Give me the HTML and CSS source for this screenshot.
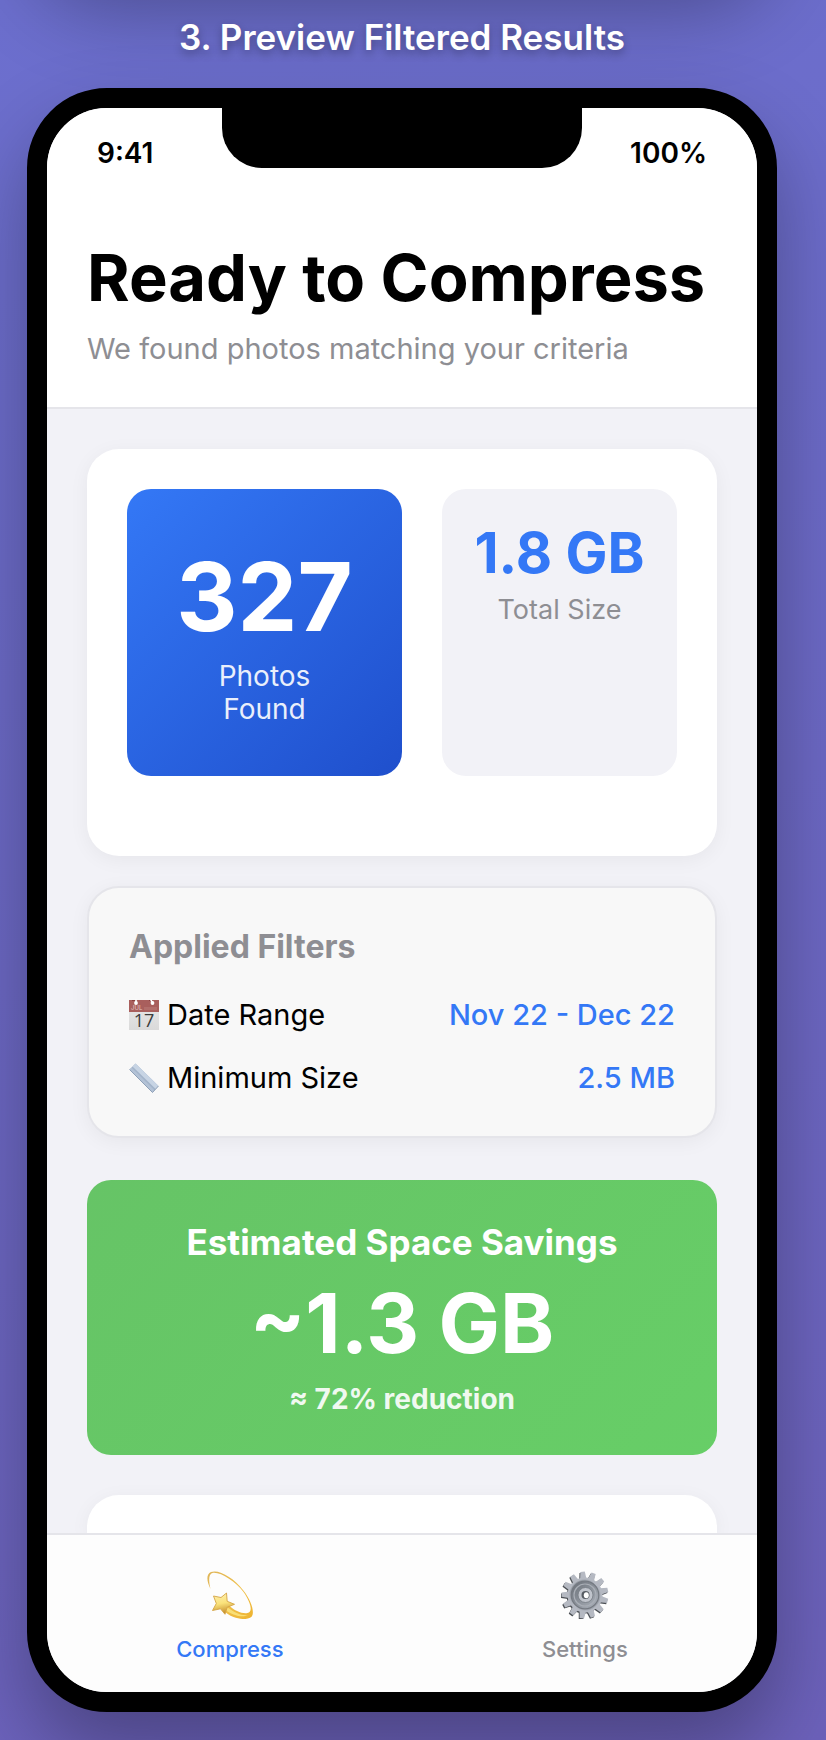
FILE: index.html
```html
<!DOCTYPE html>
<html lang="en">
<head>
<meta charset="utf-8">
<meta name="viewport" content="width=device-width, initial-scale=1">
<title>Preview Filtered Results</title>
<link rel="stylesheet" href="styles.css">
</head>
<body>
<main class="page">
  <h2 class="step-title">3. Preview Filtered Results</h2>
  <section class="device">
    <div class="notch"></div>
    <header class="header">
      <div class="status"><span>9:41</span><span>100%</span></div>
      <h1 class="title">Ready to Compress</h1>
      <p class="subtitle">We found photos matching your criteria</p>
    </header>
    <div class="content">
      <section class="card stats">
        <div class="tile tile-primary">
          <div class="count">327</div>
          <div class="count-label">Photos Found</div>
        </div>
        <div class="tile tile-plain">
          <div class="size">1.8 GB</div>
          <div class="size-label">Total Size</div>
        </div>
      </section>
      <section class="card filters">
        <h3 class="filters-title">Applied Filters</h3>
        <dl class="filter-list">
          <div class="filter">
            <dt>
              <svg class="filter-icon" viewBox="0 0 30 30" aria-hidden="true">
                <defs><linearGradient id="paper" x2="0" y2="1"><stop stop-color="#e9e9e9"/><stop offset="1" stop-color="#dadada"/></linearGradient></defs>
                <path fill="url(#paper)" d="M0 0h30v30H0z"/>
                <path fill="#a95f5d" d="M0 0h30v12H0z"/>
                <path fill="#bb7d7a" d="M15 7h13v3H15z" opacity=".5"/>
                <path stroke="#873f3d" stroke-width="1" d="M3 .5h4M20 .5h4"/>
                <path stroke="#fff" stroke-width="1.600" stroke-linecap="round" d="M7 0v2.500M22 0l1.500 2.500"/>
                <circle cx="7" cy="3" r="1.900" fill="#fff"/><circle cx="23.500" cy="3" r="1.900" fill="#fff"/>
                <text class="cal-month" x="2" y="10">JUL</text>
                <text class="cal-day" x="15" y="27" text-anchor="middle">17</text>
              </svg>
              Date Range
            </dt>
            <dd>Nov 22 - Dec 22</dd>
          </div>
          <div class="filter">
            <dt>
              <svg class="filter-icon" viewBox="0 0 30 30" aria-hidden="true">
                <path fill="#a3b4ca" d="M.5 6.500 6.500.5 29.500 23 23.500 29.500z"/>
                <path fill="#c7d4e4" d="M3.500 3.500 6.500.5 29.500 23 26.700 26z"/>
                <path fill="#b3c2d6" d="M.5 6.500 2.500 4.500 25.500 27.300 23.500 29.500z"/>
                <path stroke="#8395ae" stroke-width=".8" d="M.5 6.500 23.500 29.500 29.500 23" fill="none"/>
              </svg>
              Minimum Size
            </dt>
            <dd>2.5 MB</dd>
          </div>
        </dl>
      </section>
      <section class="savings">
        <h3 class="savings-title">Estimated Space Savings</h3>
        <div class="savings-value">~1.3 GB</div>
        <div class="savings-note">≈ 72% reduction</div>
      </section>
      <div class="card next-card"></div>
    </div>
    <nav class="tabs">
      <button class="tab tab-active" type="button">
        <svg class="tab-icon" viewBox="0 0 48 48" aria-hidden="true">
          <defs>
            <linearGradient id="trail" x1="0" y1="0" x2="1" y2="1"><stop stop-color="#dfb559"/><stop offset=".55" stop-color="#f0c14c"/><stop offset="1" stop-color="#eeb32f"/></linearGradient>
            <linearGradient id="star" x1="0" y1="0" x2=".2" y2="1"><stop stop-color="#fff1b5"/><stop offset=".55" stop-color="#fae27a"/><stop offset="1" stop-color="#c8912e"/></linearGradient>
          </defs>
          <path fill="url(#trail)" d="M4.500 18C.5 10 0 3 5 1c8-3 23 6 32 18 8 10 11 20 9.500 25-1.500 5-11 5-19 2-4-1.500-8-4-10-7l5-5c6 6 14 9 19 8 6-1 3-11-4-21C29.500 10.500 14 .5 6.500 2 2.500 3 2.500 9.500 4.500 18z"/>
          <path fill="#f9df76" d="M21 36c8 6 15 9 21 8-5 3-15 1-24-6z"/>
          <path fill="url(#star)" stroke="#d4a445" stroke-width=".9" stroke-linejoin="round" d="m20.500 22 .7 8.300 7.300 3-7.300 3-2.200 7-4.500-5.500-8 1.700 3.800-7-2.800-7.500 7.500 1.500z"/>
        </svg>
        <span>Compress</span>
      </button>
      <button class="tab" type="button">
        <svg class="tab-icon" viewBox="0 0 48 48" aria-hidden="true">
          <defs>
            <linearGradient id="gear" x1="0" y1="0" x2="1" y2="1"><stop stop-color="#8b9299"/><stop offset=".5" stop-color="#b6bac4"/><stop offset="1" stop-color="#9298a1"/></linearGradient>
            <linearGradient id="dish" x1="0" y1="0" x2="1" y2="1"><stop stop-color="#686e76"/><stop offset="1" stop-color="#aeb4bd"/></linearGradient>
            <g id="teeth">
              <path id="tooth" d="m20.800 8 1-7.400h4.400l1 7.400z"/>
              <use href="#tooth" transform="rotate(27.700 24 24)"/><use href="#tooth" transform="rotate(55.400 24 24)"/>
              <use href="#tooth" transform="rotate(83.100 24 24)"/><use href="#tooth" transform="rotate(110.800 24 24)"/>
              <use href="#tooth" transform="rotate(138.500 24 24)"/><use href="#tooth" transform="rotate(166.200 24 24)"/>
              <use href="#tooth" transform="rotate(193.800 24 24)"/><use href="#tooth" transform="rotate(221.500 24 24)"/>
              <use href="#tooth" transform="rotate(249.200 24 24)"/><use href="#tooth" transform="rotate(276.900 24 24)"/>
              <use href="#tooth" transform="rotate(304.600 24 24)"/><use href="#tooth" transform="rotate(332.300 24 24)"/>
              <circle cx="24" cy="24" r="17.500"/>
            </g>
          </defs>
          <g transform="rotate(-6 24 24)"><use href="#teeth" x="-1" y="1" fill="#4c5055"/><use href="#teeth" fill="#b5b9c2"/></g>
          <circle cx="24" cy="24" r="15.500" fill="url(#gear)"/>
          <circle cx="24" cy="24" r="13.800" fill="url(#dish)" stroke="#757a82" stroke-width="1.200"/>
          <circle cx="24" cy="24" r="11" fill="none" stroke="#a9aeb6" stroke-width="1.200"/>
          <circle cx="24.500" cy="24" r="7.500" fill="#c0c4cc" stroke="#747a82" stroke-width=".8"/>
          <circle cx="24.500" cy="24" r="4" fill="#565b62"/>
          <ellipse cx="25.300" cy="24.200" rx="2.500" ry="3" fill="#fff"/>
        </svg>
        <span>Settings</span>
      </button>
    </nav>
  </section>
</main>
</body>
</html>
```
FILE: styles.css
```css
* { box-sizing: border-box; margin: 0; padding: 0; }

body {
  font-family: Inter, "Liberation Sans", sans-serif;
  color: #000;
  background: linear-gradient(165deg, #6c6fce 0%, #6c61ba 100%);
}

.page {
  position: relative;
  overflow: hidden;
  min-height: 100vh;
  padding: 15px 49px 28px 27px;
}

/* Shadow cast by the screen above this one */
.page::before {
  content: "";
  position: absolute;
  left: 27px;
  right: 49px;
  top: -230px;
  height: 200px;
  border-radius: 80px;
  box-shadow: 0 40px 80px rgba(0, 0, 0, 0.3);
}

.step-title {
  position: relative;
  margin-bottom: 29px;
  font-size: 35px;
  line-height: 44px;
  font-weight: 600;
  text-align: center;
  color: #fff;
  text-shadow: 0 4px 8px rgba(0, 0, 0, 0.3);
}

.device {
  position: relative;
  overflow: hidden;
  border: 20px solid #000;
  border-radius: 80px;
  background: #f2f2f7;
  box-shadow: 0 40px 80px rgba(0, 0, 0, 0.3);
}

.notch {
  position: absolute;
  top: 0;
  left: 50%;
  width: 360px;
  height: 60px;
  margin-left: -180px;
  border-radius: 0 0 40px 40px;
  background: #000;
}

.header {
  padding: 28px 40px 40px;
  background: #fff;
  border-bottom: 2px solid #e5e5ea;
}

.status {
  display: flex;
  justify-content: space-between;
  padding: 0 10px;
  margin-bottom: 68px;
  font-size: 28px;
  line-height: 34px;
  font-weight: 600;
}

.title {
  margin-bottom: 13px;
  font-size: 65px;
  line-height: 80px;
  font-weight: 700;
}

.subtitle {
  font-size: 29px;
  line-height: 36px;
  color: #8e8e93;
}

.content { padding: 40px 40px 0; }

.card {
  border-radius: 32px;
  background: #fff;
  box-shadow: 0 4px 20px rgba(0, 0, 0, 0.05);
}

.stats {
  display: grid;
  grid-template-columns: 275fr 235fr;
  gap: 40px;
  padding: 40px 40px 80px;
  margin-bottom: 30px;
}

.tile { border-radius: 24px; text-align: center; }

.tile-primary {
  padding: 50px 40px;
  color: #fff;
  background: linear-gradient(135deg, #3478f6, #1f4fcc);
}

.count { margin-bottom: 5px; font-size: 95px; line-height: 116px; font-weight: 700; }
.count-label { padding: 0 30px; font-size: 28px; line-height: 33px; opacity: 0.9; }

.tile-plain { padding: 30px 20px; background: #f2f2f7; }
.size { margin-bottom: 6px; font-size: 56px; line-height: 68px; font-weight: 700; color: #3478f6; white-space: nowrap; }
.size-label { font-size: 27px; line-height: 34px; color: #8e8e93; }

.filters {
  padding: 40px;
  margin-bottom: 42px;
  border: 2px solid #e5e5ea;
  background: #f8f8f8;
}

.filters-title { margin-bottom: 31px; font-size: 32px; line-height: 38px; font-weight: 700; color: #8e8e93; }
.filter-list { display: grid; gap: 27px; }
.filter { display: flex; justify-content: space-between; font-size: 29px; line-height: 36px; }
.filter dt { display: flex; align-items: center; gap: 8px; }
.filter dd { font-weight: 500; color: #3478f6; }
.filter-icon { width: 30px; height: 30px; overflow: visible; }
.cal-month { font-size: 6px; fill: #e3c8c7; }
.cal-day { font-family: "Open Sans", sans-serif; font-size: 18px; fill: #3c3c3c; }

.savings {
  padding: 40px 40px 39px;
  margin-bottom: 40px;
  border-radius: 24px;
  text-align: center;
  color: #fff;
  background: linear-gradient(135deg, #66c466, #67ce67);
}

.savings-title { margin-bottom: 10px; font-size: 35px; line-height: 44px; font-weight: 700; }
.savings-value { margin-bottom: 8px; font-size: 82px; line-height: 100px; font-weight: 700; }
.savings-note { font-size: 28px; line-height: 34px; font-weight: 700; opacity: 0.9; }

.next-card { height: 38px; border-radius: 32px 32px 0 0; }

.tabs {
  position: relative;
  display: flex;
  justify-content: space-around;
  padding: 36px 0 29px;
  border-top: 2px solid #e5e5ea;
  background: #fdfdfd;
}

.tab {
  display: flex;
  flex-direction: column;
  align-items: center;
  gap: 16px;
  border: 0;
  background: none;
  font-family: inherit;
  font-size: 22px;
  line-height: 28px;
  font-weight: 500;
  color: #8e8e93;
}

.tab-active { color: #3478f6; }
.tab-icon { width: 48px; height: 48px; }
```
